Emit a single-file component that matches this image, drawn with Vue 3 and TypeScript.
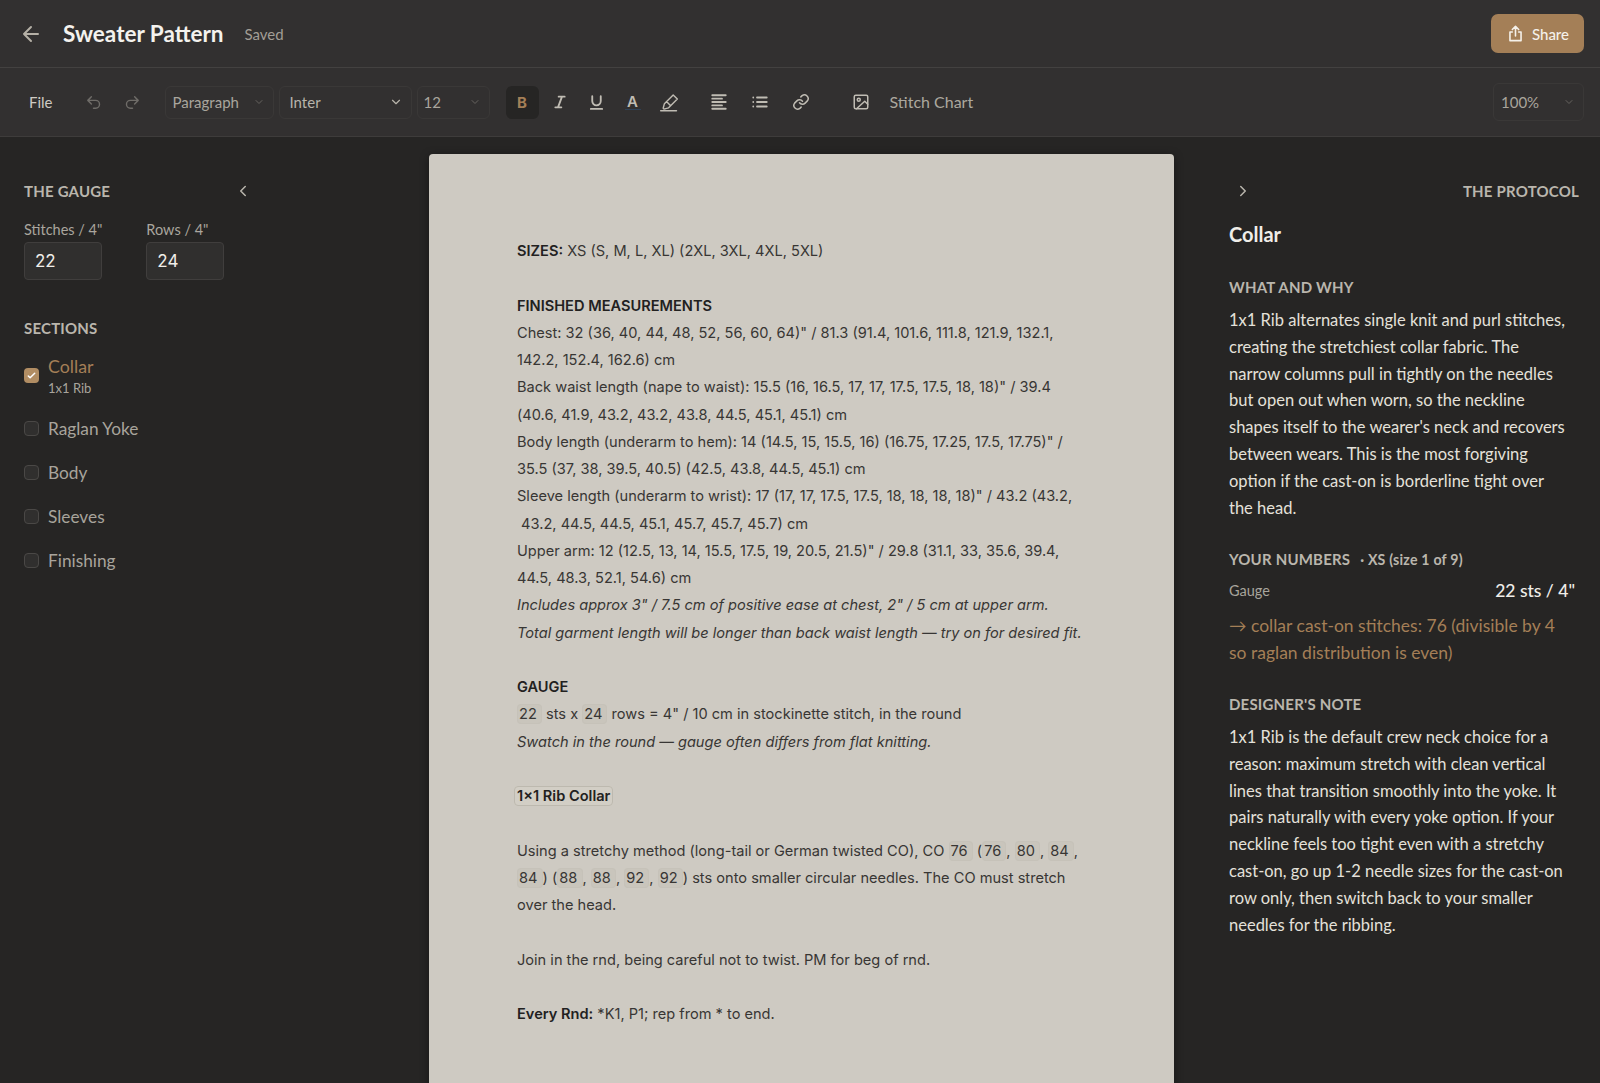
<script setup lang="ts">
interface Section {
  name: string
  sub?: string
  checked?: boolean
}

const sections: Section[] = [
  { name: 'Collar', sub: '1x1 Rib', checked: true },
  { name: 'Raglan Yoke' },
  { name: 'Body' },
  { name: 'Sleeves' },
  { name: 'Finishing' },
]

const whatAndWhy =
  "1x1 Rib alternates single knit and purl stitches, creating the stretchiest collar fabric. The narrow columns pull in tightly on the needles but open out when worn, so the neckline shapes itself to the wearer's neck and recovers between wears. This is the most forgiving option if the cast-on is borderline tight over the head."

const designerNote =
  '1x1 Rib is the default crew neck choice for a reason: maximum stretch with clean vertical lines that transition smoothly into the yoke. It pairs naturally with every yoke option. If your neckline feels too tight even with a stretchy cast-on, go up 1-2 needle sizes for the cast-on row only, then switch back to your smaller needles for the ribbing.'
</script>

<template>
  <div class="app">
    <header class="topbar">
      <svg class="back" viewBox="0 0 24 24" width="24" height="24"><path d="M19 12H5M12 19l-7-7 7-7" /></svg>
      <h1 class="title">Sweater Pattern</h1>
      <span class="saved">Saved</span>
      <button class="share" type="button">
        <svg viewBox="0 0 24 24" width="19" height="19"><path d="M12 15V3M8 7l4-4 4 4M8 10H5v11h14V10h-3" /></svg>
        Share
      </button>
    </header>

    <div class="toolbar">
      <span class="file">File</span>
      <svg class="tool dim undo" viewBox="0 0 24 24" width="17" height="17"><path d="M9 14 4 9l5-5M4 9h11a5 5 0 0 1 0 11h-3" /></svg>
      <svg class="tool dim redo" viewBox="0 0 24 24" width="17" height="17"><path d="m15 14 5-5-5-5M20 9H9a5 5 0 0 0 0 11h3" /></svg>
      <div class="select paragraph">
        <span>Paragraph</span>
        <svg viewBox="0 0 24 24" width="12" height="12"><path d="m6 9 6 6 6-6" /></svg>
      </div>
      <div class="select font">
        <span>Inter</span>
        <svg class="strong" viewBox="0 0 24 24" width="14" height="14"><path d="m6 9 6 6 6-6" /></svg>
      </div>
      <div class="select size">
        <span>12</span>
        <svg viewBox="0 0 24 24" width="12" height="12"><path d="m6 9 6 6 6-6" /></svg>
      </div>
      <button class="bold" type="button">B</button>
      <svg class="tool italic" viewBox="0 0 24 24" width="16" height="16"><path d="M19 4h-9M14 20H5M15 4 9 20" /></svg>
      <svg class="tool underline" viewBox="0 0 24 24" width="17" height="17"><path d="M6 3v7a6 6 0 0 0 12 0V3M4 21h16" /></svg>
      <span class="tool color">A</span>
      <svg class="tool highlight" viewBox="0 0 24 24" width="20" height="20"><path d="M2 22.5h19M5 19.500l1.500-5.500L17 3.500l5 5-10.500 10.500-5.500 1.500zM9 11.500l5 5" /></svg>
      <svg class="tool align" viewBox="0 0 24 24" width="18" height="18"><path d="M3 3h18M3 7.5h13M3 12h18M3 16.500h13M3 21h18" /></svg>
      <svg class="tool list" viewBox="0 0 24 24" width="18" height="18"><path d="M8 6h13M8 12h13M8 18h13M3 6h.01M3 12h.01M3 18h.01" /></svg>
      <svg class="tool link" viewBox="0 0 24 24" width="18" height="18"><path d="M10 13a5 5 0 0 0 7.500.5l3-3a5 5 0 0 0-7-7l-1.700 1.700M14 11a5 5 0 0 0-7.500-.5l-3 3a5 5 0 0 0 7 7l1.700-1.700" /></svg>
      <svg class="tool image" viewBox="0 0 24 24" width="18" height="18"><rect x="3" y="3" width="18" height="18" rx="2" /><circle cx="9" cy="9" r="2" /><path d="m21 15-4-4L6 21" /></svg>
      <span class="stitch">Stitch Chart</span>
      <div class="select zoom">
        <span>100%</span>
        <svg viewBox="0 0 24 24" width="12" height="12"><path d="m6 9 6 6 6-6" /></svg>
      </div>
    </div>

    <main class="workspace">
      <aside class="left">
        <div class="left-head">
          <h2 class="label">THE GAUGE</h2>
          <svg class="chev" viewBox="0 0 24 24" width="18" height="18"><path d="m15 18-6-6 6-6" /></svg>
        </div>
        <div class="gauge">
          <label>
            <span>Stitches / 4"</span>
            <input value="22" />
          </label>
          <label>
            <span>Rows / 4"</span>
            <input value="24" />
          </label>
        </div>
        <h2 class="label sections-label">SECTIONS</h2>
        <ul class="sections">
          <li v-for="s in sections" :key="s.name" :class="{ active: s.checked }">
            <span class="check">
              <svg v-if="s.checked" viewBox="0 0 24 24" width="11" height="11"><path d="M5 13l4 4L19 7" /></svg>
            </span>
            <div>
              <div class="sec-name">{{ s.name }}</div>
              <div v-if="s.sub" class="sec-sub">{{ s.sub }}</div>
            </div>
          </li>
        </ul>
      </aside>

      <article class="paper">
        <p><b>SIZES:</b> XS (S, M, L, XL) (2XL, 3XL, 4XL, 5XL)</p>
        <p class="gap"><b>FINISHED MEASUREMENTS</b></p>
        <p>Chest: 32 (36, 40, 44, 48, 52, 56, 60, 64)" / 81.3 (91.4, 101.6, 111.8, 121.9, 132.1, 142.2, 152.4, 162.6) cm</p>
        <p>Back waist length (nape to waist): 15.5 (16, 16.5, 17, 17, 17.5, 17.5, 18, 18)" / 39.4 (40.6, 41.9, 43.2, 43.2, 43.8, 44.5, 45.1, 45.1) cm</p>
        <p>Body length (underarm to hem): 14 (14.5, 15, 15.5, 16) (16.75, 17.25, 17.5, 17.75)" / 35.5 (37, 38, 39.5, 40.5) (42.5, 43.8, 44.5, 45.1) cm</p>
        <p>Sleeve length (underarm to wrist): 17 (17, 17, 17.5, 17.5, 18, 18, 18, 18)" / 43.2 (43.2,<br />&nbsp;43.2, 44.5, 44.5, 45.1, 45.7, 45.7, 45.7) cm</p>
        <p>Upper arm: 12 (12.5, 13, 14, 15.5, 17.5, 19, 20.5, 21.5)" / 29.8 (31.1, 33, 35.6, 39.4, 44.5, 48.3, 52.1, 54.6) cm</p>
        <p><i>Includes approx 3" / 7.5 cm of positive ease at chest, 2" / 5 cm at upper arm.</i></p>
        <p><i>Total garment length will be longer than back waist length — try on for desired fit.</i></p>
        <p class="gap"><b>GAUGE</b></p>
        <p><span class="chip">22&nbsp;</span> sts x <span class="chip">24&nbsp;</span> rows = 4" / 10 cm in stockinette stitch, in the round</p>
        <p><i>Swatch in the round — gauge often differs from flat knitting.</i></p>
        <p class="gap"><span class="chip heading">1×1 Rib Collar</span></p>
        <p class="gap">Using a stretchy method (long-tail or German twisted CO), CO <span class="chip">76&nbsp;</span> (<span class="chip">76&nbsp;</span>, <span class="chip">80&nbsp;</span>, <span class="chip">84&nbsp;</span>, <span class="chip">84&nbsp;</span>) (<span class="chip">88&nbsp;</span>, <span class="chip">88&nbsp;</span>, <span class="chip">92&nbsp;</span>, <span class="chip">92&nbsp;</span>) sts onto smaller circular needles. The CO must stretch over the head.</p>
        <p class="gap">Join in the rnd, being careful not to twist. PM for beg of rnd.</p>
        <p class="gap"><b>Every Rnd:</b> *K1, P1; rep from * to end.</p>
      </article>

      <aside class="right">
        <div class="right-head">
          <svg class="chev" viewBox="0 0 24 24" width="18" height="18"><path d="m9 18 6-6-6-6" /></svg>
          <h2 class="label">THE PROTOCOL</h2>
        </div>
        <h3 class="sec-title">Collar</h3>
        <h2 class="label what">WHAT AND WHY</h2>
        <p class="prose">{{ whatAndWhy }}</p>
        <h2 class="label numbers">YOUR NUMBERS <span class="size-note">· XS (size 1 of 9)</span></h2>
        <div class="gauge-row">
          <span>Gauge</span>
          <b>22 sts / 4"</b>
        </div>
        <p class="result">→ collar cast-on stitches: 76 (divisible by 4 so raglan distribution is even)</p>
        <h2 class="label note">DESIGNER'S NOTE</h2>
        <p class="prose">{{ designerNote }}</p>
      </aside>
    </main>
  </div>
</template>

<style>
html,
body {
  margin: 0;
  height: 100%;
  background: #262524;
}
</style>

<style scoped>
.app {
  height: 1083px;
  overflow: hidden;
  display: flex;
  flex-direction: column;
  font-family: Lato, 'Liberation Sans', sans-serif;
  color: #d8d4cc;
}

svg {
  fill: none;
  stroke: currentColor;
  stroke-width: 2;
  stroke-linecap: round;
  stroke-linejoin: round;
  flex: none;
}

h1,
h2,
h3,
p,
ul {
  margin: 0;
  padding: 0;
}

.topbar {
  height: 68px;
  box-sizing: border-box;
  display: flex;
  align-items: center;
  padding: 0 16px 0 19px;
  background: #323030;
  border-bottom: 1px solid #434140;
}

.back {
  color: #b5b0a6;
}

.title {
  margin-left: 20px;
  font-size: 22.5px;
  font-weight: 700;
  color: #f4f2ee;
}

.saved {
  margin-left: 21px;
  font-size: 15px;
  color: #a29e96;
}

.share {
  margin-left: auto;
  width: 93px;
  height: 39px;
  display: flex;
  align-items: center;
  justify-content: center;
  gap: 7px;
  border: 0;
  border-radius: 7px;
  background: #a47f57;
  color: #f5f1ea;
  font: 500 15px Lato, sans-serif;
}

.toolbar {
  height: 69px;
  box-sizing: border-box;
  display: flex;
  align-items: center;
  padding-left: 29px;
  padding-right: 16px;
  background: #323030;
  border-bottom: 1px solid #3e3c3b;
  color: #b8b4ab;
}

.file {
  font-size: 15px;
  color: #cfcbc3;
}

.tool {
  color: #c0bcb3;
}

.dim {
  color: #6f6c68;
}

.undo {
  margin-left: 32px;
}

.redo {
  margin-left: 22px;
}

.select {
  height: 33px;
  box-sizing: border-box;
  display: flex;
  align-items: center;
  justify-content: space-between;
  padding: 0 8px 0 7px;
  border: 1px solid #3a3837;
  border-radius: 6px;
  font-size: 15px;
  color: #a9a59d;
}

.select svg {
  color: #66635f;
}

.select svg.strong {
  color: #b8b4ab;
}

.paragraph {
  width: 109px;
  margin-left: 24px;
}

.font {
  width: 133px;
  margin-left: 5px;
  padding-left: 10px;
  color: #b8b4ab;
}

.size {
  width: 73px;
  margin-left: 5px;
  padding-left: 6px;
}

.bold {
  width: 33px;
  height: 33px;
  margin-left: 16px;
  border: 0;
  border-radius: 6px;
  background: #262524;
  color: #a47f57;
  font: 700 15px Inter, sans-serif;
}

.italic {
  margin-left: 13px;
  stroke-width: 2.8;
}

.underline {
  margin-left: 20px;
  stroke-width: 2.6;
}

.color {
  width: 16px;
  margin-left: 20px;
  text-align: center;
  font: 600 15px Inter, sans-serif;
  border-bottom: 1px solid #2f4258;
  line-height: 15px;
}

.highlight {
  margin-left: 18px;
  stroke-width: 1.7;
}

.align {
  margin-left: 31px;
  stroke-width: 2.4;
}

.list {
  margin-left: 23px;
  stroke-width: 2.4;
}

.link {
  margin-left: 23px;
}

.image {
  margin-left: 42px;
}

.stitch {
  margin-left: 20px;
  font-size: 16px;
  line-height: 18px;
  margin-bottom: 1px;
  color: #aca89f;
}

.zoom {
  width: 91px;
  height: 38px;
  margin-left: auto;
}

.workspace {
  flex: 1;
  min-height: 0;
  display: flex;
  background: #262524;
}

.left {
  width: 429px;
  flex: none;
  box-sizing: border-box;
  padding: 45px 0 0 24px;
}

.label {
  font-size: 15px;
  font-weight: 700;
  letter-spacing: 0.2px;
  color: #bab6ad;
}

.left-head {
  width: 228px;
  display: flex;
  align-items: center;
  justify-content: space-between;
}

.chev {
  color: #bab6ad;
}

.gauge {
  display: flex;
  gap: 44px;
  margin-top: 21px;
}

.gauge label {
  display: flex;
  flex-direction: column;
  gap: 4px;
  font-size: 14.5px;
  color: #aaa69e;
}

.gauge input {
  width: 78px;
  height: 38px;
  box-sizing: border-box;
  padding: 0 10px;
  border: 1px solid #403e3d;
  border-radius: 4px;
  background: #302f2e;
  color: #f0eee9;
  font: 400 17px Inter, sans-serif;
}

.sections-label {
  margin-top: 39px;
}

.sections {
  list-style: none;
  margin-top: 14px;
}

.sections li {
  display: flex;
  align-items: center;
  gap: 9px;
  height: 44px;
  font-size: 17.3px;
  color: #a8a49c;
}

.sections li.active {
  height: 48px;
  margin-bottom: 7px;
  font-size: 17.8px;
  color: #a47f57;
}

.check {
  width: 15px;
  height: 15px;
  box-sizing: border-box;
  display: flex;
  align-items: center;
  justify-content: center;
  border: 1px solid #4a4846;
  border-radius: 4px;
  background: #302f2e;
}

.active .check {
  border: 0;
  background: #b18d63;
  color: #fff;
}

.active .check svg {
  stroke-width: 3.2;
}

.sec-sub {
  margin-top: 3px;
  font-size: 13px;
  color: #a8a49c;
}

.paper {
  width: 745px;
  height: 1100px;
  flex: none;
  box-sizing: border-box;
  margin-top: 17px;
  padding: 84px 87px 0 88px;
  border-radius: 4px 4px 0 0;
  background: #cecac2;
  box-shadow: 0 2px 10px rgba(0, 0, 0, 0.4);
  font-family: Inter, sans-serif;
  font-size: 14.6px;
  line-height: 27.26px;
  color: #383634;
}

.paper b {
  font-weight: 600;
  color: #22211f;
}

.gap {
  margin-top: 27.26px;
}

.chip {
  padding: 0 0 0 1px;
  border: 1px solid #c6c2b9;
  border-radius: 4px;
  background: #c9c5bc;
}

.chip.heading {
  margin-left: -3px;
  padding: 0 2px;
  font-weight: 600;
  color: #22211f;
  border-color: #bdb9af;
  background: #d2cec5;
}

.right {
  flex: 1;
  min-width: 0;
  box-sizing: border-box;
  padding: 45px 21px 0 55px;
}

.right-head {
  display: flex;
  align-items: center;
  justify-content: space-between;
  margin-right: 0;
}

.right-head .chev {
  margin-left: 5px;
}

.sec-title {
  margin-top: 22px;
  font-size: 20px;
  font-weight: 700;
  color: #f0eee9;
}

.what {
  margin-top: 32px;
}

.prose {
  margin-top: 11px;
  padding-right: 10px;
  font-size: 16.5px;
  line-height: 26.8px;
  color: #e4e1da;
}

.numbers {
  margin-top: 29px;
}

.size-note {
  margin-left: 6px;
  font-size: 14.2px;
}

.gauge-row {
  display: flex;
  align-items: center;
  justify-content: space-between;
  margin-top: 12px;
  padding-right: 4px;
  font-size: 14.5px;
  color: #a8a49c;
}

.gauge-row b {
  font-size: 17.5px;
  font-weight: 500;
  color: #f0eee9;
}

.result {
  margin-top: 12px;
  padding-right: 10px;
  font-size: 17.5px;
  line-height: 26.8px;
  color: #a47f57;
}

.note {
  margin-top: 28px;
}
</style>
